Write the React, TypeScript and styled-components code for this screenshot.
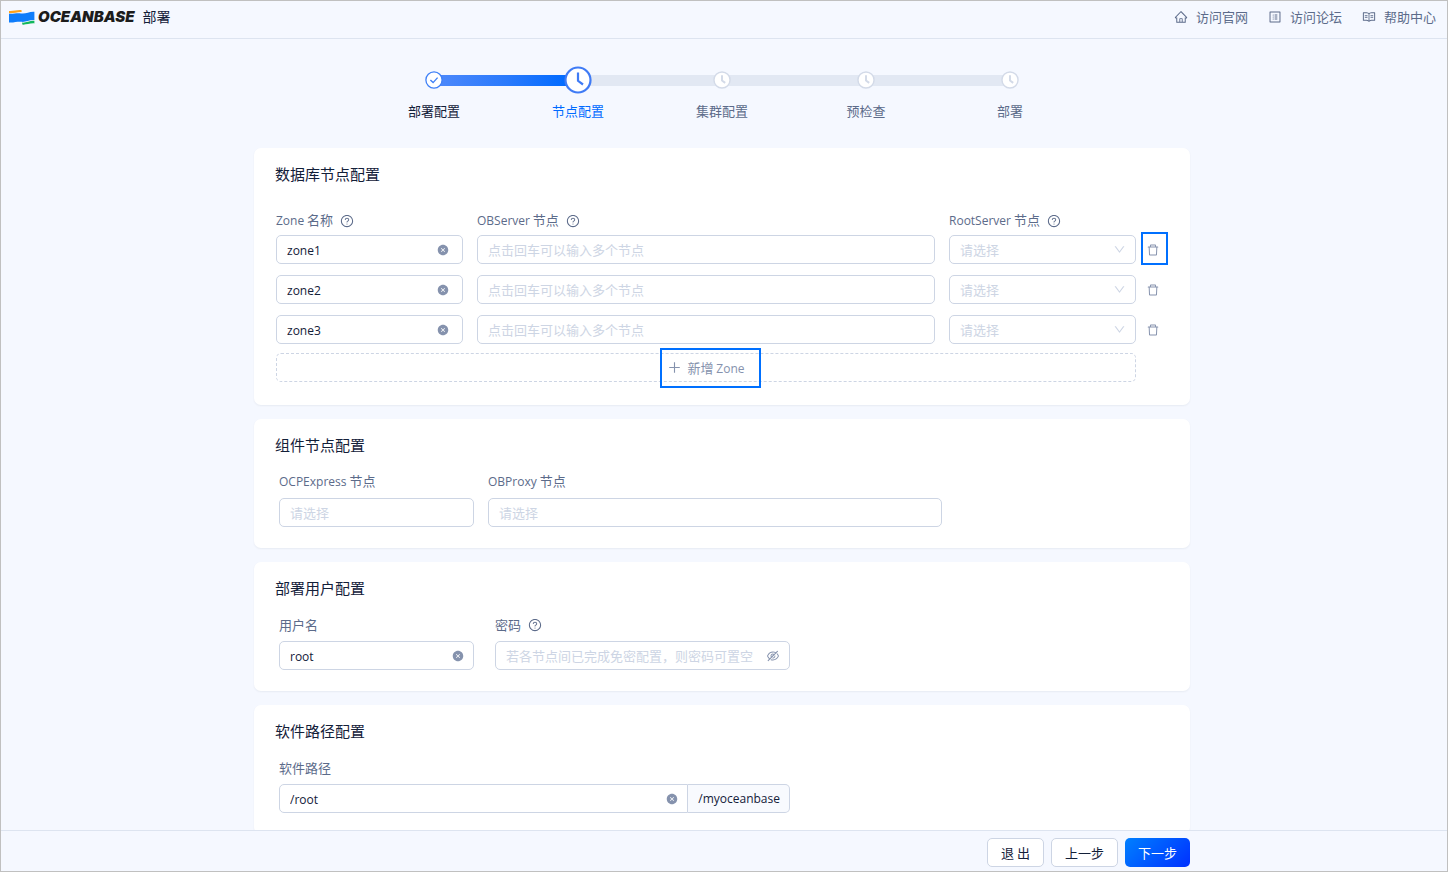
import React from "react";
import styled, { createGlobalStyle, css } from "styled-components";
import {
  AiFillCloseCircle,
  AiOutlineDelete,
  AiOutlineDown,
  AiOutlineEyeInvisible,
  AiOutlineHome,
  AiOutlinePlus,
  AiOutlineProfile,
  AiOutlineQuestionCircle,
  AiOutlineRead,
} from "react-icons/ai";

const color = {
  page: "#f5f8ff",
  frame: "#c0c0c0",
  line: "#dde4f0",
  border: "#cdd5e4",
  text: "#132039",
  label: "#5c6b8a",
  icon: "#8592ad",
  placeholder: "#cdd5e4",
  primary: "#006aff",
};

const GlobalStyle = createGlobalStyle`
  * { box-sizing: border-box; }
  body { margin: 0; background: ${color.page}; }
  body, button, input, select {
    font-family: "Noto Sans CJK SC", "Open Sans", sans-serif;
    font-size: 13px;
    font-weight: 400;
    color: ${color.text};
  }
  svg { display: block; flex: none; }
`;

const Page = styled.div`
  display: flex;
  flex-direction: column;
  height: 100vh;
  border: 1px solid ${color.frame};
`;

const Header = styled.header`
  display: flex;
  align-items: center;
  justify-content: space-between;
  flex: none;
  height: 38px;
  padding: 0 11px 6px 8px;
  border-bottom: 1px solid ${color.line};
`;

const Brand = styled.div`
  display: flex;
  align-items: center;
`;

const BrandName = styled.span`
  margin: 0 8px 0 3px;
  font: italic 900 15px/20px Inter, sans-serif;
  color: #1c1c1c;
`;

const AppName = styled.h1`
  margin: 0;
  padding-bottom: 2px;
  font-size: 14px;
  font-weight: 400;
  line-height: 20px;
`;

const HeaderLinks = styled.nav`
  display: flex;
  gap: 20px;
`;

const HeaderLink = styled.a`
  display: flex;
  align-items: center;
  gap: 8px;
  line-height: 20px;
  color: ${color.label};
  text-decoration: none;
`;

const Main = styled.main`
  flex: 1;
  min-height: 0;
  overflow: hidden auto;
  scrollbar-width: none;
  padding: 27px 4px 14px 0;
`;

const Steps = styled.ol`
  display: flex;
  max-width: 720px;
  margin: 0 auto 27px;
  padding: 0;
  list-style: none;
`;

type StepState = "done" | "active" | "wait";

const Step = styled.li`
  flex: 1;
  text-align: center;
`;

const StepTrack = styled.div`
  display: flex;
  align-items: center;
  height: 28px;
`;

const tones = {
  none: "transparent",
  start: "linear-gradient(90deg, #4c88fb, #2a7afc)",
  end: "linear-gradient(90deg, #2a7afc, #006aff)",
  rest: "#e2e8f3",
};

const Tail = styled.span<{ $tone: keyof typeof tones }>`
  flex: 1;
  height: 11px;
  background: ${(p) => tones[p.$tone]};
`;

const StepMark = styled.span`
  position: relative;
  margin: 0 -4px;
`;

const StepLabel = styled.div<{ $state: StepState }>`
  margin-top: 7px;
  line-height: 20px;
  color: ${(p) =>
    p.$state === "active" ? color.primary : p.$state === "done" ? color.text : color.label};
`;

const Content = styled.div`
  display: flex;
  flex-direction: column;
  gap: 14px;
  max-width: 936px;
  margin: 0 auto;
`;

const Card = styled.section`
  padding: 15px 21px 21px;
  border-radius: 7px;
  background: #fff;
  box-shadow: 0 1px 2px rgba(19, 32, 57, 0.06);
`;

const CardTitle = styled.h2<{ $spacious?: boolean }>`
  margin: 0 0 ${(p) => (p.$spacious ? 25 : 15)}px;
  font-size: 15px;
  font-weight: 400;
  line-height: 22px;
`;

const ZoneTable = styled.div`
  display: flex;
  flex-direction: column;
  gap: 11px;
  padding: 0 1px 2px;
`;

const ZoneRow = styled.div`
  display: flex;
  gap: 5px;
`;

const ZoneHead = styled(ZoneRow)`
  margin-bottom: -7px;
`;

const ZoneFields = styled.div`
  display: grid;
  flex: 1;
  grid-template-columns: 187px 1fr 187px;
  gap: 14px;
`;

const DeleteSlot = styled.div`
  flex: none;
  width: 27px;
`;

const highlight = css`
  content: "";
  position: absolute;
  border: 2px solid #0070ff;
`;

const DeleteButton = styled.button<{ $highlighted?: boolean }>`
  position: relative;
  display: flex;
  align-items: center;
  width: 27px;
  height: 29px;
  padding: 0 0 0 5px;
  border: 0;
  background: none;
  color: ${color.icon};
  ${(p) =>
    p.$highlighted &&
    css`
      &::after {
        ${highlight}
        inset: -3px 0 -1px;
      }
    `}
`;

const AddZoneButton = styled.button`
  display: flex;
  justify-content: center;
  height: 29px;
  margin: -2px 32px 0 0;
  padding: 0;
  border: 1px dashed ${color.border};
  border-radius: 5px;
  background: none;
  color: ${color.icon};
`;

const AddZoneText = styled.span`
  position: relative;
  display: flex;
  align-items: center;
  gap: 5px;
  line-height: 25px;
  height: 27px;
  &::after {
    ${highlight}
    inset: -6px -16px -7px -7px;
  }
`;

const FormRow = styled.div<{ $gap?: number }>`
  display: flex;
  gap: ${(p) => p.$gap ?? 14}px;
  padding-left: 4px;
`;

const FormItem = styled.div<{ $width: number }>`
  display: flex;
  flex-direction: column;
  gap: 6px;
  flex: 0 1 ${(p) => p.$width}px;
`;

const Label = styled.label`
  display: flex;
  align-items: center;
  gap: 7px;
  height: 21px;
  line-height: 20px;
  color: ${color.label};
`;

const Latin = styled.span`
  font-family: "Open Sans", sans-serif;
  font-size: 12px;
`;

const Field = styled.div<{ $end?: number }>`
  display: flex;
  align-items: center;
  flex: 1;
  min-width: 0;
  height: 29px;
  padding-right: ${(p) => p.$end ?? 9}px;
  border: 1px solid ${color.border};
  border-radius: 5px;
  background: #fff;
  color: ${color.icon};
`;

const FieldGroup = styled.div`
  display: flex;
  ${Field} {
    border-radius: 5px 0 0 5px;
  }
`;

const Addon = styled.span`
  flex: none;
  padding: 0 9px 0 10px;
  border: 1px solid ${color.border};
  border-left: 0;
  border-radius: 0 5px 5px 0;
  background: #f8fafe;
  height: 29px;
  font: 400 12px/28px "Open Sans", sans-serif;
`;

const TextInput = styled.input`
  flex: 1;
  min-width: 0;
  height: 27px;
  padding: 1px 0 0 10px;
  border: 0;
  outline: 0;
  background: none;
  font: 400 12px "Open Sans", sans-serif;
  &::placeholder {
    font: 400 13px "Noto Sans CJK SC", sans-serif;
    color: ${color.placeholder};
    opacity: 1;
  }
`;

const SelectInput = styled.select`
  flex: 1;
  min-width: 0;
  height: 27px;
  padding: 0 0 1px 10px;
  border: 0;
  outline: 0;
  appearance: none;
  background: none;
  color: ${color.placeholder};
`;

const IconButton = styled.button`
  display: flex;
  padding: 0;
  border: 0;
  background: none;
  color: ${color.icon};
`;

const Chevron = styled(AiOutlineDown)`
  color: ${color.placeholder};
`;

const Footer = styled.footer`
  flex: none;
  padding: 7px 4px 4px 0;
  border-top: 1px solid ${color.line};
`;

const FooterActions = styled.div`
  display: flex;
  justify-content: flex-end;
  gap: 7px;
  max-width: 936px;
  margin: 0 auto;
`;

const ActionButton = styled.button<{ $primary?: boolean }>`
  height: 29px;
  padding: 0 13px 1px;
  border: 1px solid ${color.border};
  border-radius: 5px;
  background: #fff;
  ${(p) =>
    p.$primary &&
    css`
      border: 0;
      background: linear-gradient(135deg, #0080ff, #0030ff);
      color: #fff;
    `}
`;

function Flag() {
  return (
    <svg width="26" height="16" viewBox="0 0 26 16" aria-hidden="true">
      <path d="M0 2C4.500 2.400 8 .6 12.600 1.200V3C8 2.800 4.500 4.600 0 4.200z" fill="#ffa21a" />
      <path d="M0 4.800C4.500 5.200 8 3.600 12 4.400 16.500 5.400 20 2.400 25.400 2.800V11C20 10.600 17 13.400 12.400 12.800 8.500 12.400 4.500 13.800 0 13.400z" fill="#0f7dfb" />
      <path d="M13.200 13.600C17 14 21 11.400 25.400 11.800V14.400C21 14 17 16 13.200 15.600z" fill="#12b85c" />
    </svg>
  );
}

function StepIcon({ state }: { state: StepState }) {
  if (state === "done") {
    return (
      <svg width="18" height="18" viewBox="0 0 18 18" aria-hidden="true">
        <circle cx="9" cy="9" r="8.100" fill="#fff" stroke="#3f80f7" strokeWidth="1.300" />
        <path d="M5.400 8.900l2.700 2.700 4.500-5" fill="none" stroke="#3f80f7" strokeWidth="1.400" />
      </svg>
    );
  }
  const active = state === "active";
  const size = active ? 28 : 18;
  const stroke = active ? "#3f7bf5" : "#d3dae8";
  return (
    <svg width={size} height={size} viewBox="0 0 28 28" aria-hidden="true">
      <circle cx="14" cy="14" r="12.500" fill="#fff" stroke={stroke} strokeWidth="2.200" />
      <path d="M14 6.500v8.300l5 3.700" fill="none" stroke={stroke} strokeWidth={active ? 2.200 : 3} />
    </svg>
  );
}

function ClearButton({ label }: { label: string }) {
  return (
    <IconButton type="button" aria-label={label}>
      <AiFillCloseCircle size={12} />
    </IconButton>
  );
}

const Help = () => <AiOutlineQuestionCircle size={14} aria-hidden="true" />;

const steps: { label: string; state: StepState; before: keyof typeof tones; after: keyof typeof tones }[] = [
  { label: "部署配置", state: "done", before: "none", after: "start" },
  { label: "节点配置", state: "active", before: "end", after: "rest" },
  { label: "集群配置", state: "wait", before: "rest", after: "rest" },
  { label: "预检查", state: "wait", before: "rest", after: "rest" },
  { label: "部署", state: "wait", before: "rest", after: "none" },
];

const zones = ["zone1", "zone2", "zone3"];

export default function App() {
  return (
    <>
      <GlobalStyle />
      <Page>
        <Header>
          <Brand>
            <Flag />
            <BrandName>OCEANBASE</BrandName>
            <AppName>部署</AppName>
          </Brand>
          <HeaderLinks>
            <HeaderLink href="#site">
              <AiOutlineHome size={14} />
              访问官网
            </HeaderLink>
            <HeaderLink href="#forum">
              <AiOutlineProfile size={14} />
              访问论坛
            </HeaderLink>
            <HeaderLink href="#help">
              <AiOutlineRead size={14} />
              帮助中心
            </HeaderLink>
          </HeaderLinks>
        </Header>

        <Main>
          <Steps>
            {steps.map((s) => (
              <Step key={s.label} aria-current={s.state === "active" ? "step" : undefined}>
                <StepTrack>
                  <Tail $tone={s.before} />
                  <StepMark>
                    <StepIcon state={s.state} />
                  </StepMark>
                  <Tail $tone={s.after} />
                </StepTrack>
                <StepLabel $state={s.state}>{s.label}</StepLabel>
              </Step>
            ))}
          </Steps>

          <Content>
            <Card>
              <CardTitle $spacious>数据库节点配置</CardTitle>
              <ZoneTable>
                <ZoneHead>
                  <ZoneFields>
                    <Label htmlFor="name-zone1">
                      <span><Latin>Zone</Latin> 名称</span>
                      <Help />
                    </Label>
                    <Label htmlFor="servers-zone1">
                      <span><Latin>OBServer</Latin> 节点</span>
                      <Help />
                    </Label>
                    <Label htmlFor="root-zone1">
                      <span><Latin>RootServer</Latin> 节点</span>
                      <Help />
                    </Label>
                  </ZoneFields>
                  <DeleteSlot />
                </ZoneHead>
                {zones.map((zone, i) => (
                  <ZoneRow key={zone}>
                    <ZoneFields>
                      <Field $end={13}>
                        <TextInput id={`name-${zone}`} aria-label="Zone 名称" defaultValue={zone} />
                        <ClearButton label="清除" />
                      </Field>
                      <Field>
                        <TextInput
                          id={`servers-${zone}`}
                          aria-label="OBServer 节点"
                          placeholder="点击回车可以输入多个节点"
                        />
                      </Field>
                      <Field>
                        <SelectInput id={`root-${zone}`} aria-label="RootServer 节点" defaultValue="">
                          <option value="">请选择</option>
                        </SelectInput>
                        <Chevron size={13} />
                      </Field>
                    </ZoneFields>
                    <DeleteButton type="button" aria-label="删除" $highlighted={i === 0}>
                      <AiOutlineDelete size={14} />
                    </DeleteButton>
                  </ZoneRow>
                ))}
                <AddZoneButton type="button">
                  <AddZoneText>
                    <AiOutlinePlus size={15} />
                    <span>新增 <Latin>Zone</Latin></span>
                  </AddZoneText>
                </AddZoneButton>
              </ZoneTable>
            </Card>

            <Card>
              <CardTitle>组件节点配置</CardTitle>
              <FormRow>
                <FormItem $width={195}>
                  <Label htmlFor="ocp">
                    <span><Latin>OCPExpress</Latin> 节点</span>
                  </Label>
                  <Field>
                    <SelectInput id="ocp" defaultValue="">
                      <option value="">请选择</option>
                    </SelectInput>
                  </Field>
                </FormItem>
                <FormItem $width={454}>
                  <Label htmlFor="obproxy">
                    <span><Latin>OBProxy</Latin> 节点</span>
                  </Label>
                  <Field>
                    <SelectInput id="obproxy" defaultValue="">
                      <option value="">请选择</option>
                    </SelectInput>
                  </Field>
                </FormItem>
              </FormRow>
            </Card>

            <Card>
              <CardTitle>部署用户配置</CardTitle>
              <FormRow $gap={21}>
                <FormItem $width={195}>
                  <Label htmlFor="user">用户名</Label>
                  <Field>
                    <TextInput id="user" defaultValue="root" />
                    <ClearButton label="清除" />
                  </Field>
                </FormItem>
                <FormItem $width={295}>
                  <Label htmlFor="password">
                    密码
                    <Help />
                  </Label>
                  <Field>
                    <TextInput
                      id="password"
                      type="password"
                      placeholder="若各节点间已完成免密配置，则密码可置空"
                    />
                    <IconButton type="button" aria-label="显示密码">
                      <AiOutlineEyeInvisible size={14} />
                    </IconButton>
                  </Field>
                </FormItem>
              </FormRow>
            </Card>

            <Card>
              <CardTitle>软件路径配置</CardTitle>
              <FormRow>
                <FormItem $width={511}>
                  <Label htmlFor="path">软件路径</Label>
                  <FieldGroup>
                    <Field>
                      <TextInput id="path" defaultValue="/root" />
                      <ClearButton label="清除" />
                    </Field>
                    <Addon>/myoceanbase</Addon>
                  </FieldGroup>
                </FormItem>
              </FormRow>
            </Card>
          </Content>
        </Main>

        <Footer>
          <FooterActions>
            <ActionButton type="button">退 出</ActionButton>
            <ActionButton type="button">上一步</ActionButton>
            <ActionButton type="button" $primary>
              下一步
            </ActionButton>
          </FooterActions>
        </Footer>
      </Page>
    </>
  );
}
